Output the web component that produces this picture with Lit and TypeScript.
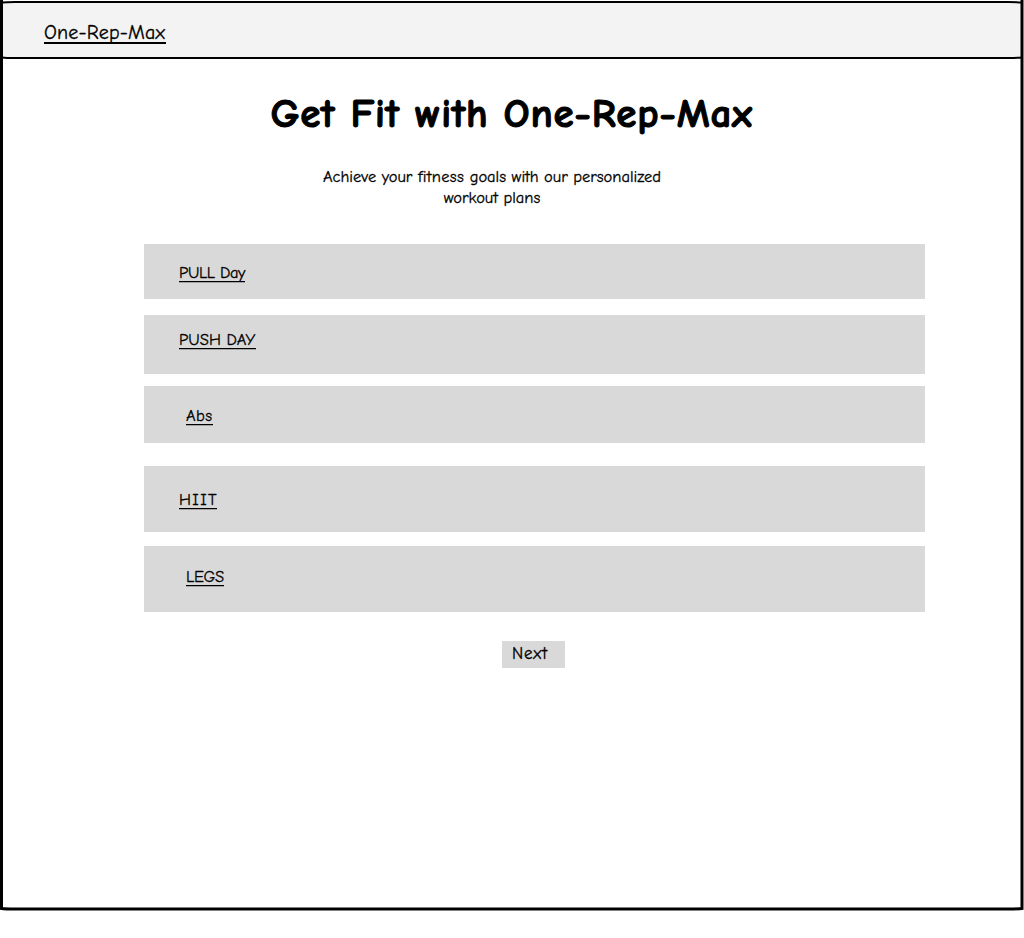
import { LitElement, html, css } from "lit";
import { customElement } from "lit/decorators.js";

const PLANS = [
  { id: "pull", label: "PULL Day" },
  { id: "push", label: "PUSH DAY" },
  { id: "abs", label: "Abs" },
  { id: "hiit", label: "HIIT" },
  { id: "legs", label: "LEGS" },
];

@customElement("app-root")
export class AppRoot extends LitElement {
  static styles = css`
    :host {
      display: block;
      position: relative;
      box-sizing: border-box;
      width: 1024px;
      height: 938px;
      overflow: hidden;
      background: #fff;
      color: #000;
      font-family: "Comic Sans MS", "Comic Neue", Lato, sans-serif;
      font-size: 16.5px;
      font-variant-ligatures: none;
      -webkit-text-stroke: 0.3px #000;
    }
    .frame {
      position: absolute;
      inset: 0;
      pointer-events: none;
    }
    .bar {
      box-sizing: border-box;
      height: 59px;
      margin: 0 2px;
      padding: 23px 0 0 42px;
      background: linear-gradient(#fff 2px, #f3f3f3 2px, #f3f3f3 58px, #fff 58px);
    }
    a {
      display: block;
      color: inherit;
      text-decoration: none;
      white-space: nowrap;
      border-bottom: 1px solid #000;
      box-shadow: 0 1px rgba(0, 0, 0, 0.25);
      line-height: 16px;
    }
    .brand {
      width: 122px;
      font-size: 20px;
      line-height: 19px;
      border-bottom-width: 2px;
      box-shadow: none;
      letter-spacing: 0.2px;
    }
    main {
      display: flex;
      flex-direction: column;
      align-items: flex-start;
    }
    h1 {
      margin: 31px 0 0 270.5px;
      font-size: 41px;
      line-height: 48px;
      font-weight: 700;
      letter-spacing: 0.7px;
      white-space: nowrap;
      -webkit-text-stroke: 1.1px #000;
    }
    p {
      width: 400px;
      margin: 28px 0 0 292px;
      line-height: 21px;
      text-align: center;
      letter-spacing: -0.02px;
    }
    .fitness {
      letter-spacing: 0.3px;
    }
    .plans {
      display: flex;
      flex-direction: column;
      width: 781px;
      margin: 36px 0 0 144px;
      padding: 0;
      list-style: none;
    }
    .plan {
      display: flex;
      align-items: flex-start;
      box-sizing: border-box;
      background: #d9d9d9;
    }
    .pull { height: 55px; padding: 21px 0 0 35px; }
    .push { height: 59px; margin-top: 16px; padding: 17px 0 0 35px; }
    .abs { height: 57px; margin-top: 12px; padding: 22px 0 0 42px; }
    .hiit { height: 66px; margin-top: 23px; padding: 26px 0 0 35px; }
    .legs { height: 66px; margin-top: 14px; padding: 23px 0 0 42px; }
    .pull a { width: 66px; letter-spacing: -0.35px; }
    .push a { width: 77px; letter-spacing: 0.05px; }
    .abs a { width: 27px; letter-spacing: 0.5px; }
    .hiit a { width: 38px; letter-spacing: 1.4px; }
    .legs a { width: 38px; letter-spacing: -0.25px; }
    button {
      box-sizing: border-box;
      width: 63px;
      height: 27px;
      margin: 29px 0 0 502px;
      padding: 3px 0 4px 10px;
      border: 0;
      background: #d9d9d9;
      color: inherit;
      font: inherit;
      font-size: 17px;
      letter-spacing: 0.8px;
      line-height: 20px;
      text-align: left;
      -webkit-text-stroke: 0.3px #000;
    }
  `;

  render() {
    return html`
      <header class="bar"><a class="brand">One-Rep-Max</a></header>
      <main>
        <h1>Get Fit with One-Rep-Max</h1>
        <p>Achieve your <span class="fitness">fitness</span> goals with our personalized<br />workout plans</p>
        <ul class="plans">
          ${PLANS.map((p) => html`<li class="plan ${p.id}"><a>${p.label}</a></li>`)}
        </ul>
        <button>Next</button>
      </main>
      <svg class="frame" width="1024" height="938" fill="none" stroke="#000">
        <path stroke-width="3" d="M1.5 0V908.5Q5 909 15 909H1008Q1018 909 1022 908.5V0" />
        <path stroke-width="2" d="M2 2.6Q6 2 15 2H1008Q1018 2 1022 2.6M2 57.4Q6 58 15 58H1008Q1018 58 1022 57.4" />
      </svg>
    `;
  }
}
